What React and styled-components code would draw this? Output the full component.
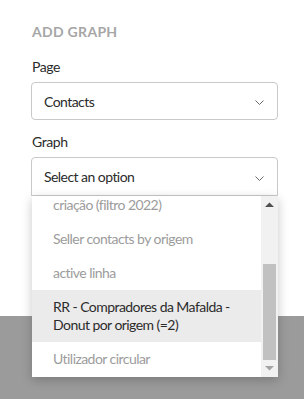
import React from "react";
import styled, { createGlobalStyle } from "styled-components";

const Global = createGlobalStyle`
  html, body { margin: 0; padding: 0; }
  body {
    background: #9b9b9b;
    font-family: Lato, "Open Sans", sans-serif;
    width: 304px;
    height: 399px;
    overflow: hidden;
  }
`;

const Card = styled.div`
  background: #ffffff;
  height: 316px;
  box-sizing: border-box;
  padding: 22px 26px 0 31px;
  display: flex;
  flex-direction: column;
`;

const Title = styled.h2`
  margin: 0 0 0 1px;
  font-size: 14px;
  line-height: 20px;
  font-weight: 700;
  letter-spacing: 0.3px;
  color: #a6a6a6;
  text-transform: uppercase;
`;

const Field = styled.div`
  display: flex;
  flex-direction: column;
  margin-top: ${(p) => p.$gap}px;
  position: relative;
`;

const Label = styled.label`
  margin: 0 0 5px 1px;
  font-size: 14px;
  line-height: 20px;
  letter-spacing: -0.4px;
  color: #2b2b2b;
`;

const SelectBox = styled.div`
  height: ${(p) => (p.$open ? 39 : 38)}px;
  box-sizing: border-box;
  border: 1px solid #c9c9c9;
  border-radius: ${(p) => (p.$open ? "4px 4px 0 0" : "4px")};
  display: flex;
  align-items: center;
  justify-content: space-between;
  padding: 0 13px 0 12px;
  font-size: 14px;
  letter-spacing: -0.55px;
  color: #2b2b2b;
  background: #fff;
`;

const Chevron = () => (
  <svg width="9" height="5" viewBox="0 0 9 5" style={{ marginTop: 3 }}>
    <polyline points="0.5,0.5 4.5,4.5 8.5,0.5" fill="none" stroke="#6b6b6b" strokeWidth="1" />
  </svg>
);

const Menu = styled.div`
  position: absolute;
  top: 100%;
  left: 1px;
  width: 246px;
  background: #fff;
  box-shadow: 0 3px 10px rgba(0, 0, 0, 0.22);
  display: flex;
  overflow: hidden;
`;

const Viewport = styled.div`
  flex: 1;
  overflow: hidden;
  height: 181px;
`;

const List = styled.ul`
  list-style: none;
  margin: -8px 0 0 0;
  padding: 0;
`;

const Item = styled.li`
  padding: 8px 14px 8px 21px;
  font-size: 14px;
  line-height: 18px;
  letter-spacing: -0.55px;
  color: ${(p) => (p.$active ? "#2b2b2b" : "#9c9c9c")};
  background: ${(p) => (p.$active ? "#ebebeb" : "transparent")};
`;

const Scrollbar = styled.div`
  width: 17px;
  background: #f1f1f1;
  display: flex;
  flex-direction: column;
`;

const Arrow = styled.div`
  height: 17px;
  display: flex;
  align-items: center;
  justify-content: center;
`;

const Track = styled.div`
  flex: 1;
  display: flex;
  flex-direction: column;
  justify-content: flex-end;
  padding: 0 2px;
`;

const Thumb = styled.div`
  height: 96px;
  background: #c1c1c1;
`;

const Tri = ({ up, color }) => (
  <svg width="9" height="5" viewBox="0 0 9 5">
    <polygon points={up ? "0,5 9,5 4.5,0.5" : "0,0 9,0 4.5,4.5"} fill={color} />
  </svg>
);

const items = [
  { label: "criação (filtro 2022)" },
  { label: "Seller contacts by origem" },
  { label: "active linha" },
  { label: "RR - Compradores da Mafalda - Donut por origem (=2)", active: true },
  { label: "Utilizador circular" },
];

export default function App() {
  return (
    <>
      <Global />
      <Card>
        <Title>Add Graph</Title>
        <Field $gap={15}>
          <Label>Page</Label>
          <SelectBox>
            <span>Contacts</span>
            <Chevron />
          </SelectBox>
        </Field>
        <Field $gap={12}>
          <Label>Graph</Label>
          <SelectBox $open>
            <span>Select an option</span>
            <Chevron />
          </SelectBox>
          <Menu>
            <Viewport>
              <List>
                {items.map((it) => (
                  <Item key={it.label} $active={it.active}>
                    {it.label}
                  </Item>
                ))}
              </List>
            </Viewport>
            <Scrollbar>
              <Arrow>
                <Tri up color="#505050" />
              </Arrow>
              <Track>
                <Thumb />
              </Track>
              <Arrow>
                <Tri color="#a3a3a3" />
              </Arrow>
            </Scrollbar>
          </Menu>
        </Field>
      </Card>
    </>
  );
}
